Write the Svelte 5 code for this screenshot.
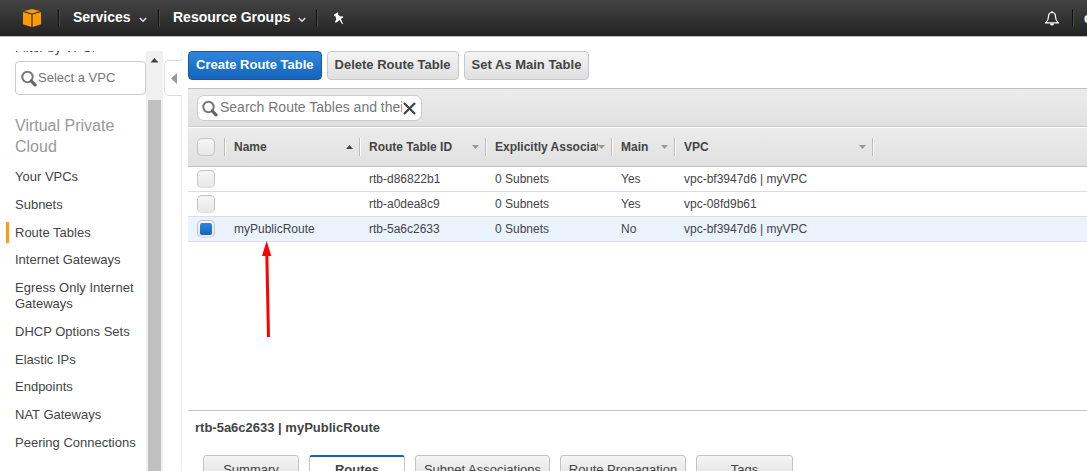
<script>
  const links = [
    'Your VPCs',
    'Subnets',
    'Route Tables',
    'Internet Gateways',
    'Egress Only Internet Gateways',
    'DHCP Options Sets',
    'Elastic IPs',
    'Endpoints',
    'NAT Gateways',
    'Peering Connections'
  ];
  const columns = [
    { title: 'Name', width: 135, sorted: true },
    { title: 'Route Table ID', width: 126 },
    { title: 'Explicitly Associated With', width: 126 },
    { title: 'Main', width: 63 },
    { title: 'VPC', width: 198 }
  ];
  let rows = $state([
    { name: '', id: 'rtb-d86822b1', subnets: '0 Subnets', main: 'Yes', vpc: 'vpc-bf3947d6 | myVPC', selected: false },
    { name: '', id: 'rtb-a0dea8c9', subnets: '0 Subnets', main: 'Yes', vpc: 'vpc-08fd9b61', selected: false },
    { name: 'myPublicRoute', id: 'rtb-5a6c2633', subnets: '0 Subnets', main: 'No', vpc: 'vpc-bf3947d6 | myVPC', selected: true }
  ]);
  const tabs = [
    { title: 'Summary', width: 96 },
    { title: 'Routes', width: 96 },
    { title: 'Subnet Associations', width: 135 },
    { title: 'Route Propagation', width: 126 },
    { title: 'Tags', width: 97 }
  ];
  let activeTab = $state('Routes');
  let query = $state('');
</script>

{#snippet chevron()}
  <svg class="chevron" width="8" height="6" viewBox="0 0 8 6" aria-hidden="true">
    <path d="M.8 1 4 4.200 7.200 1" fill="none" stroke="#ddd" stroke-width="1.600" />
  </svg>
{/snippet}

{#snippet magnifier()}
  <svg class="magnifier" width="16" height="17" viewBox="0 0 16 17" aria-hidden="true">
    <circle cx="6.500" cy="7" r="5.200" fill="none" stroke="#777" stroke-width="2" />
    <path d="M10.300 11 14 14.900" stroke="#666" stroke-width="3.200" stroke-linecap="round" />
  </svg>
{/snippet}

<div class="app">
  <header class="topbar">
    <a class="logo" href="#home" aria-label="Console home">
      <svg width="18" height="18" viewBox="0 0 18 18" aria-hidden="true">
        <path d="M9 0 17 2 9 4.400 1 2Z" fill="#f90" />
        <path d="M0 3 8.400 5.500V18L0 15.200ZM18 3 9.600 5.500V18L18 15.200Z" fill="#f90" />
      </svg>
    </a>
    <button class="menu services">Services {@render chevron()}</button>
    <button class="menu groups">Resource Groups {@render chevron()}</button>
    <button class="pin" aria-label="Pin shortcuts">
      <svg width="11" height="13" viewBox="0 0 11 13" aria-hidden="true">
        <path d="M.8 2.800 4.800.2 5.300 1.500 5 2.500 7.200 4.500 9.800 4.200 10.300 5.300 7.900 7 10 11.800 9.300 12.200 6.500 8.100 4.200 10 2.600 10.800 2 9.800 3.300 7.200 2.400 4.300 1.300 3.900Z" fill="#fff" />
      </svg>
    </button>
    <button class="bell" aria-label="Notifications">
      <svg width="14" height="15" viewBox="0 0 14 15" aria-hidden="true">
        <path d="M7 1.500C4.500 1.500 3.500 3.300 3.500 5.500 3.500 9 2.600 10.200.8 11.800H13.200C11.400 10.200 10.500 9 10.500 5.500 10.500 3.300 9.500 1.500 7 1.500Z" fill="none" stroke="#fff" stroke-width="1.200" />
        <path d="M5 12.400H9Q8.600 14.600 7 14.600T5 12.400ZM6.200.2H7.800V1.500H6.200Z" fill="#fff" />
      </svg>
    </button>
    <button class="account">chris</button>
  </header>

  <div class="body">
    <aside class="sidebar">
      <div class="sidecontent">
        <label for="vpc-filter">Filter by VPC:</label>
        <div class="filter">
          {@render magnifier()}
          <input id="vpc-filter" type="text" placeholder="Select a VPC" />
        </div>
        <h2>Virtual Private Cloud</h2>
        <nav>
          {#each links as link}
            <a href="#vpc" class:current={link === 'Route Tables'}>{link}</a>
          {/each}
        </nav>
      </div>
      <div class="scrollbar" aria-hidden="true">
        <svg width="9" height="5" viewBox="0 0 9 5"><path d="M4.500 0 8.500 4.500H.5Z" fill="#404040" /></svg>
        <div class="thumb"></div>
      </div>
    </aside>

    <div class="gutter">
      <button aria-label="Collapse navigation">
        <svg width="6" height="11" viewBox="0 0 6 11" aria-hidden="true"><path d="M0 5.500 6 0V11Z" fill="#999" /></svg>
      </button>
    </div>

    <main>
      <div class="actions">
        <button class="primary">Create Route Table</button>
        <button>Delete Route Table</button>
        <button>Set As Main Table</button>
      </div>

      <section class="list">
        <div class="toolbar">
          <div class="search">
            {@render magnifier()}
            <input type="text" aria-label="Search Route Tables" placeholder="Search Route Tables and their attributes" bind:value={query} />
            <button aria-label="Clear search" onclick={() => (query = '')}>
              <svg width="13" height="13" viewBox="0 0 13 13" aria-hidden="true">
                <path d="M1 1 12 12M12 1 1 12" stroke="#444" stroke-width="2.300" />
              </svg>
            </button>
          </div>
        </div>

        <table>
          <colgroup>
            <col style="width: 37px" />
            {#each columns as c}<col style="width: {c.width}px" />{/each}
            <col />
          </colgroup>
          <thead>
            <tr>
              <th><div class="head check"><input type="checkbox" aria-label="Select all" /></div></th>
              {#each columns as c}
                <th>
                  <div class="head">
                    <span>{c.title}</span>
                    <svg width="7" height="4" viewBox="0 0 7 4" aria-hidden="true">
                      {#if c.sorted}<path d="M3.500 0 7 4H0Z" fill="#444" />{:else}<path d="M0 0H7L3.500 4Z" fill="#999" />{/if}
                    </svg>
                  </div>
                </th>
              {/each}
              <th></th>
            </tr>
          </thead>
          <tbody>
            {#each rows as row}
              <tr class:selected={row.selected}>
                <td class="check"><input type="checkbox" aria-label="Select {row.id}" bind:checked={row.selected} /></td>
                <td>{row.name}</td>
                <td>{row.id}</td>
                <td>{row.subnets}</td>
                <td>{row.main}</td>
                <td>{row.vpc}</td>
                <td></td>
              </tr>
            {/each}
          </tbody>
        </table>
      </section>

      <section class="details">
        <h3>rtb-5a6c2633 | myPublicRoute</h3>
        <div class="tabs" role="tablist">
          {#each tabs as tab}
            <button role="tab" style="width: {tab.width}px" aria-selected={tab.title === activeTab} onclick={() => (activeTab = tab.title)}>{tab.title}</button>
          {/each}
        </div>
      </section>
    </main>
  </div>

  <svg class="pointer" width="10" height="97" viewBox="0 0 10 97" aria-hidden="true">
    <path d="M4.600 0 9.300 15H0Z" fill="#f00" />
    <path d="M4.800 13 6.500 96" stroke="#f00" stroke-width="3" />
  </svg>
</div>

<style>
  :global(body) {
    margin: 0;
    background: #fff;
  }
  .app {
    position: relative;
    display: flex;
    flex-direction: column;
    height: 100vh;
    overflow: hidden;
    font-family: "Liberation Sans", Arial, sans-serif;
    font-size: 13px;
    color: #444;
  }
  .app :global(*) {
    box-sizing: border-box;
  }
  svg {
    flex: none;
  }
  button,
  input {
    font: inherit;
    color: inherit;
    margin: 0;
  }
  button {
    padding: 0;
    border: 0;
    background: none;
    white-space: nowrap;
  }

  .topbar {
    display: flex;
    align-items: center;
    flex: none;
    height: 37px;
    background: linear-gradient(#444, #222);
    border-bottom: 1px solid #bbb;
    color: #fff;
    font-size: 14px;
    font-weight: bold;
  }
  .topbar > * {
    display: flex;
    align-items: center;
    height: 18px;
  }
  .topbar > * + * {
    border-left: 1px solid #111;
    box-shadow: inset 1px 0 #4a4a4a;
  }
  .logo {
    width: 58px;
    padding-left: 23px;
  }
  .menu {
    gap: 8px;
    padding: 0 0 2px 14px;
    flex: none;
  }
  .menu .chevron {
    margin-top: 5px;
  }
  .services {
    width: 100px;
  }
  .groups {
    width: 158px;
  }
  .pin {
    padding-left: 16px;
  }
  .topbar .bell {
    margin-left: auto;
    width: 27px;
    border: 0;
    box-shadow: none;
  }
  .account {
    width: 15px;
    padding-left: 11px;
    overflow: hidden;
  }

  .body {
    display: flex;
    flex: 1;
    min-height: 0;
    padding-top: 14px;
  }
  .sidebar {
    display: flex;
    flex: none;
    width: 163px;
    overflow: hidden;
  }
  .sidecontent {
    flex: 1;
    min-width: 0;
    margin-top: -12px;
  }
  .sidecontent label {
    display: block;
    height: 22px;
    padding-left: 15px;
    line-height: 18px;
  }
  .filter {
    display: flex;
    align-items: center;
    height: 34px;
    margin-left: 15px;
    padding-left: 5px;
    border: 1px solid #ccc;
    border-radius: 4px;
  }
  .filter input {
    flex: 1;
    min-width: 0;
    padding: 0 1px 2px;
    border: 0;
    outline: 0;
    background: none;
  }
  input::placeholder {
    color: #777;
    opacity: 1;
  }
  h2 {
    margin: 20px 15px 9px;
    font-size: 16px;
    line-height: 21px;
    font-weight: normal;
    color: #999;
  }
  nav {
    display: flex;
    flex-direction: column;
    justify-content: space-between;
    min-height: 287px;
    padding-left: 6px;
  }
  nav a {
    padding: 3px 6px 2px;
    border-left: 3px solid transparent;
    line-height: 16px;
    color: #444;
    text-decoration: none;
  }
  nav a.current {
    border-color: #ff9912;
  }
  .scrollbar {
    display: flex;
    flex-direction: column;
    align-items: center;
    flex: none;
    width: 17px;
    padding-top: 7px;
    background: #f0f0f0;
  }
  .thumb {
    flex: 1;
    width: 13px;
    margin-top: 37px;
    background: #c0c0c0;
  }

  .gutter {
    display: flex;
    flex-direction: column;
    flex: none;
    width: 25px;
    padding: 0 6px 0 1px;
  }
  .gutter::before,
  .gutter::after {
    content: "";
    height: 9px;
    border-right: 1px solid #eee;
  }
  .gutter::after {
    flex: 1;
  }
  .gutter button {
    display: flex;
    align-items: center;
    height: 36px;
    padding-left: 6px;
    border: 1px solid #ddd;
    border-right: 0;
    border-radius: 5px 0 0 5px;
  }

  main {
    display: flex;
    flex-direction: column;
    flex: 1;
    min-width: 0;
  }
  .actions {
    display: flex;
    gap: 5px;
    padding-bottom: 8px;
  }
  .actions button {
    height: 29px;
    padding: 0 7px 2px;
    border: 1px solid #c8c8c8;
    border-radius: 4px;
    background: linear-gradient(#f4f4f4, #e0e0e0);
    font-weight: bold;
  }
  .actions .primary {
    border-color: #1659a5;
    background: linear-gradient(#2f86dd, #1464bb);
    color: #fff;
  }
  .list {
    flex: 1;
    min-height: 0;
  }
  .toolbar {
    height: 39px;
    padding: 6px 9px;
    border-top: 1px solid #c0c0c0;
    border-bottom: 1px solid #c8c8c8;
    background: linear-gradient(#ececec, #e0e0e0);
  }
  .search {
    display: flex;
    align-items: center;
    width: 225px;
    height: 26px;
    padding: 0 5px 0 4px;
    border: 1px solid #ccc;
    border-radius: 7px;
    background: #fff;
    font-size: 14px;
  }
  .search input {
    flex: 1;
    min-width: 0;
    margin-right: 1px;
    padding: 0 0 2px 2px;
    border: 0;
    outline: 0;
    background: none;
  }
  .search button {
    display: flex;
  }

  table {
    width: 100%;
    table-layout: fixed;
    border-collapse: separate;
    border-spacing: 0;
    font-size: 12px;
  }
  thead tr {
    background: linear-gradient(#ececec, #e0e0e0);
  }
  th {
    height: 40px;
    padding: 0;
    border-top: 1px solid #fff;
    border-bottom: 1px solid #c0c0c0;
    text-align: left;
  }
  .head {
    display: flex;
    align-items: center;
    height: 18px;
    padding: 0 6px 0 9px;
    border-right: 1px solid #bbb;
    box-shadow: 1px 0 #fff;
  }
  .head span {
    flex: 1;
    overflow: hidden;
    white-space: nowrap;
  }
  td {
    height: 25px;
    padding: 0 9px;
    border-bottom: 1px solid #ddd;
    line-height: 16px;
    white-space: nowrap;
  }
  .selected td {
    background: #eaf3fe;
  }
  .check input {
    display: grid;
    place-content: center;
    appearance: none;
    flex: none;
    width: 18px;
    height: 18px;
    border: 1px solid #c4c4c4;
    border-radius: 5px;
    background: linear-gradient(#f6f6f6, #e8e8e8);
  }
  td.check input {
    border-bottom-color: #ddd;
  }
  .check input:checked::before {
    content: "";
    width: 12px;
    height: 12px;
    border-radius: 2px;
    background: linear-gradient(#2f86dd, #1464bb);
  }

  .details {
    padding: 9px 0 0 7px;
    border-top: 1px solid #c4c4c4;
  }
  h3 {
    margin: 0 0 19px;
    font-size: 13px;
    line-height: 16px;
  }
  .tabs {
    display: flex;
    gap: 10px;
    height: 16px;
    padding-left: 8px;
  }
  .tabs button {
    flex: none;
    height: 28px;
    border: 1px solid #c4c4c4;
    border-radius: 3px 3px 0 0;
    background: linear-gradient(#f4f4f4, #e0e0e0);
  }
  .tabs button[aria-selected="true"] {
    border-top: 2px solid #1464bb;
    background: #fff;
    font-weight: bold;
  }
  .pointer {
    position: absolute;
    left: 262px;
    top: 241px;
  }
</style>
